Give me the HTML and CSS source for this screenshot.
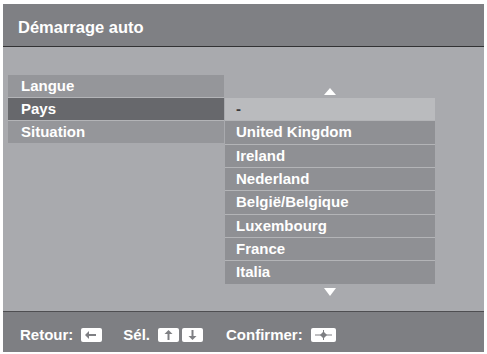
FILE: index.html
```html
<!DOCTYPE html>
<html lang="fr">
<head>
<meta charset="utf-8">
<title>Démarrage auto</title>
<link rel="stylesheet" href="styles.css">
</head>
<body>
<div class="panel">
  <div class="header">Démarrage auto</div>
  <div class="content">
    <div class="menu">
      <div class="item">Langue</div>
      <div class="item selected">Pays</div>
      <div class="item">Situation</div>
    </div>
    <div class="list-col">
      <div class="arrow-area"><span class="tri-up"></span></div>
      <div class="list">
        <div class="opt current">-</div>
        <div class="opt">United Kingdom</div>
        <div class="opt">Ireland</div>
        <div class="opt">Nederland</div>
        <div class="opt">België/Belgique</div>
        <div class="opt">Luxembourg</div>
        <div class="opt">France</div>
        <div class="opt">Italia</div>
      </div>
      <div class="arrow-down-area"><span class="tri-down"></span></div>
    </div>
  </div>
  <div class="footer">
    <span class="label">Retour:</span>
    <svg class="key" width="21" height="14" viewBox="0 0 21 14"><rect width="21" height="14" rx="2" fill="#fff"/><path d="M5 7h10" stroke="#7e7f83" stroke-width="2"/><path d="M4 7l4-4v8z" fill="#7e7f83"/></svg>
    <span class="label sel">Sél.</span>
    <svg class="key" width="21" height="14" viewBox="0 0 21 14"><rect width="21" height="14" rx="2" fill="#fff"/><path d="M10.5 5v7" stroke="#7e7f83" stroke-width="2"/><path d="M10.5 2l4 4h-8z" fill="#7e7f83"/></svg>
    <svg class="key key2" width="21" height="14" viewBox="0 0 21 14"><rect width="21" height="14" rx="2" fill="#fff"/><path d="M10.5 2v7" stroke="#7e7f83" stroke-width="2"/><path d="M10.5 12l4-4h-8z" fill="#7e7f83"/></svg>
    <span class="label conf">Confirmer:</span>
    <svg class="key" width="25" height="14" viewBox="0 0 25 14"><rect width="25" height="14" rx="2" fill="#fff"/><path d="M4 7h17M12.5 2v10" stroke="#7e7f83" stroke-width="1"/><path d="M12.5 3.5l3.5 3.5-3.5 3.5-3.5-3.5z" fill="#7e7f83"/></svg>
  </div>
</div>
</body>
</html>
```

FILE: styles.css
```css
html, body {
  margin: 0;
  padding: 0;
  background: #ffffff;
}
body {
  font-family: "Liberation Sans", Arial, sans-serif;
  font-weight: bold;
  color: #ffffff;
}
.panel {
  margin: 4px 0 0 3px;
  width: 481px;
  height: 348px;
  display: flex;
  flex-direction: column;
  background: #a9aaae;
}
.header {
  box-sizing: border-box;
  height: 43px;
  padding: 14px 0 0 15px;
  font-size: 16.5px;
  line-height: 19px;
  background: #7f8084;
  border-bottom: 1px solid #323234;
}
.content {
  flex: 1;
  display: flex;
  align-items: flex-start;
  padding: 28px 0 0 5px;
  gap: 1px;
}
.menu {
  width: 216px;
  display: flex;
  flex-direction: column;
  gap: 1px;
  background: #b3b4b7;
}
.item {
  height: 22px;
  line-height: 22px;
  font-size: 15px;
  padding-left: 13px;
  background: #95969a;
}
.item.selected {
  background: #67686c;
}
.list-col {
  width: 210px;
  display: flex;
  flex-direction: column;
}
.arrow-area {
  height: 23px;
  display: flex;
  justify-content: center;
  padding-top: 13px;
  box-sizing: border-box;
}
.tri-up {
  width: 0;
  height: 0;
  border-left: 6.5px solid transparent;
  border-right: 6.5px solid transparent;
  border-bottom: 7px solid #ffffff;
}
.list {
  display: flex;
  flex-direction: column;
  gap: 1px;
  background: #b3b4b7;
}
.opt {
  height: 22.33px;
  line-height: 22px;
  font-size: 15px;
  padding-left: 11px;
  background: #8f9094;
}
.opt.current {
  background: #babbbe;
  color: #3a3a3c;
}
.arrow-down-area {
  display: flex;
  justify-content: center;
  padding-top: 4px;
}
.tri-down {
  width: 0;
  height: 0;
  border-left: 6px solid transparent;
  border-right: 6px solid transparent;
  border-top: 8px solid #ffffff;
}
.footer {
  box-sizing: border-box;
  height: 41px;
  border-top: 1px solid #4e4e51;
  background: #7e7f83;
  display: flex;
  align-items: flex-start;
  padding: 14px 0 0 17px;
  font-size: 15px;
  line-height: 17px;
}
.key {
  display: block;
  margin-top: 1.5px;
  margin-left: 8px;
}
.key2 {
  margin-left: 3px;
}
.sel {
  margin-left: 21px;
}
.conf {
  margin-left: 23px;
}
```
